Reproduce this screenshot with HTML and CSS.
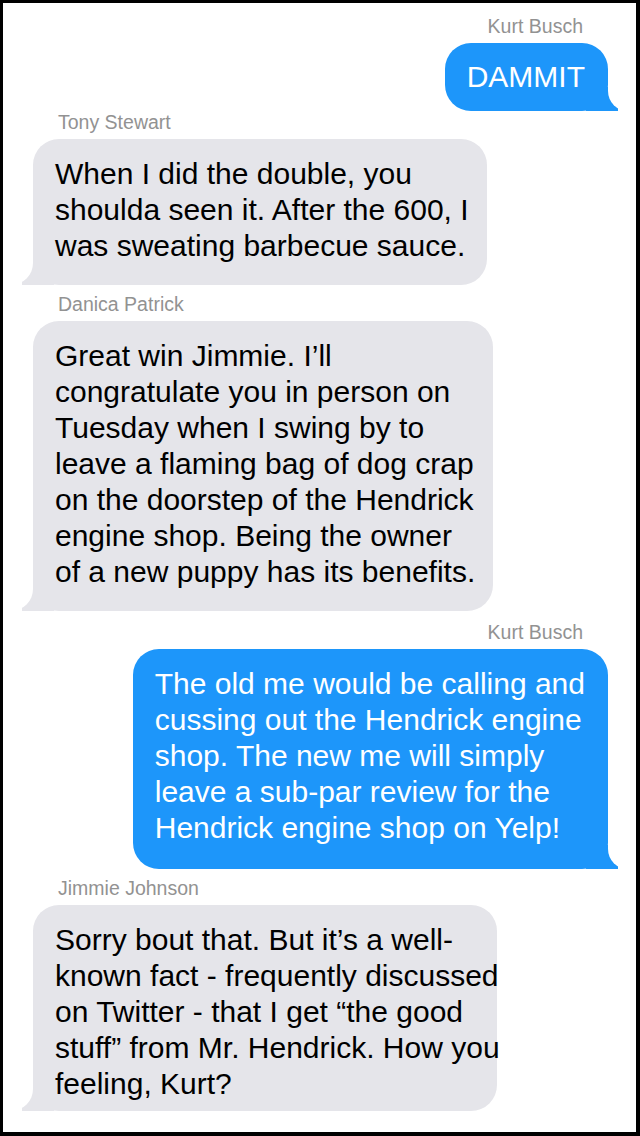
FILE: index.html
```
<!DOCTYPE html>
<html>
<head>
<meta charset="utf-8">
<link rel="stylesheet" href="styles.css">
</head>
<body>
<div class="frame">
  <div class="msg out">
    <div class="name">Kurt Busch</div>
    <div class="bubble short">DAMMIT</div>
  </div>
  <div class="msg in tight">
    <div class="name">Tony Stewart</div>
    <div class="bubble">When I did the double, you<br>shoulda seen it. After the 600, I<br>was sweating barbecue sauce.</div>
  </div>
  <div class="msg in">
    <div class="name">Danica Patrick</div>
    <div class="bubble">Great win Jimmie. I’ll<br>congratulate you in person on<br>Tuesday when I swing by to<br>leave a flaming bag of dog crap<br>on the doorstep of the Hendrick<br>engine shop. Being the owner<br>of a new puppy has its benefits.</div>
  </div>
  <div class="msg out loose">
    <div class="name">Kurt Busch</div>
    <div class="bubble tall">The old me would be calling and<br>cussing out the Hendrick engine<br>shop. The new me will simply<br>leave a sub-par review for the<br>Hendrick engine shop on Yelp!</div>
  </div>
  <div class="msg in">
    <div class="name">Jimmie Johnson</div>
    <div class="bubble fixed">Sorry bout that. But it’s a well-<br>known fact - frequently discussed<br>on Twitter - that I get “the good<br>stuff” from Mr. Hendrick. How you<br>feeling, Kurt?</div>
  </div>
</div>
</body>
</html>
```
FILE: styles.css
```
html, body {
  margin: 0;
  padding: 0;
  background: #000;
}

.frame {
  box-sizing: border-box;
  width: 640px;
  height: 1136px;
  overflow: hidden;
  background: #fff;
  border-style: solid;
  border-color: #000;
  border-width: 3px 4px 4px 3px;
  padding: 10px 28px 0 30px;
  font-family: "Liberation Sans", Arial, Helvetica, sans-serif;
}

.msg {
  display: flex;
  flex-direction: column;
  margin-top: 6px;
}

.msg:first-child {
  margin-top: 0;
}

.msg.tight {
  margin-top: -2px;
}

.msg.loose {
  margin-top: 8px;
}

.msg.in {
  align-items: flex-start;
}

.msg.out {
  align-items: flex-end;
}

.name {
  font-size: 19.5px;
  line-height: 22px;
  color: #929292;
  margin: 0 25px 6px;
  padding-top: 2px;
}

.bubble {
  position: relative;
  z-index: 0;
  box-sizing: border-box;
  font-size: 30px;
  line-height: 36px;
  white-space: nowrap;
  padding: 17px 18px 21px 22px;
  border-radius: 26px;
}

.in .bubble {
  background: #e5e5ea;
  color: #000;
}

.out .bubble {
  background: #1d96fa;
  color: #fff;
  padding-right: 23px;
}

.bubble.short {
  padding-top: 16px;
  padding-bottom: 16px;
}

.bubble.tall {
  padding-bottom: 23px;
}

.bubble.fixed {
  width: 464px;
  padding-bottom: 9px;
}

.bubble::before,
.bubble::after {
  content: "";
  position: absolute;
  bottom: 0;
  z-index: -1;
}

.in .bubble::before {
  left: -11px;
  width: 32px;
  height: 26px;
  background: #e5e5ea;
}

.in .bubble::after {
  left: -24px;
  width: 24px;
  height: 28px;
  background: #fff;
  border-bottom-right-radius: 22px;
}

.out .bubble::before {
  right: -10px;
  width: 32px;
  height: 24px;
  background: #1d96fa;
}

.out .bubble::after {
  right: -22px;
  width: 22px;
  height: 26px;
  background: #fff;
  border-bottom-left-radius: 20px;
}
```
